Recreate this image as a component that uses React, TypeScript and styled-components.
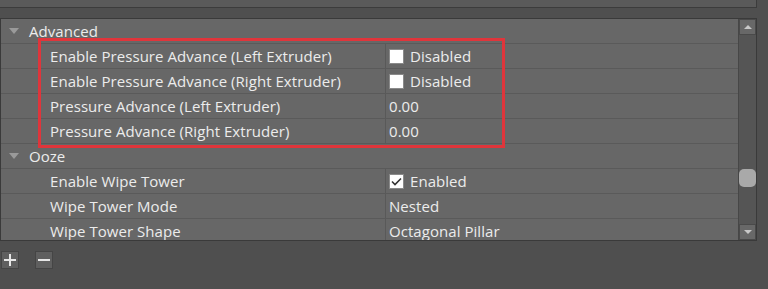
import { createGlobalStyle, styled } from 'styled-components'

const GlobalStyle = createGlobalStyle`
  html, body {
    margin: 0;
    padding: 0;
    background: #4f4f4f;
  }
  body {
    font-family: "Open Sans", "Noto Sans", sans-serif;
    color: #ececec;
  }
`

const Page = styled.div`
  width: 768px;
  height: 289px;
  overflow: hidden;
  background: #4f4f4f;
`

const TopPanel = styled.div`
  width: 756px;
  height: 7px;
  background: #5a5a5a;
  border-right: 1px solid #3c3c3c;
  border-bottom: 1px solid #3c3c3c;
`

const Tree = styled.div`
  position: relative;
  margin-top: 10px;
  width: 755px;
  height: 221px;
  display: flex;
  border: 1px solid #3a3a3a;
  background: #666666;
`

const Rows = styled.div`
  flex: 1;
  overflow: hidden;
`

const Row = styled.div<{ $header?: boolean }>`
  box-sizing: border-box;
  height: 25px;
  display: flex;
  align-items: center;
  border-bottom: 1px solid #5a5a5a;
  background: #676767;
  font-size: 15px;
  letter-spacing: 0.05px;
  white-space: nowrap;
`

const Triangle = styled.span`
  width: 0;
  height: 0;
  margin: 0 10px 0 8px;
  border-left: 5px solid transparent;
  border-right: 5px solid transparent;
  border-top: 6px solid #9a9a9a;
`

const Label = styled.div`
  width: 335px;
  padding-left: 49px;
`

const Value = styled.div`
  flex: 1;
  align-self: stretch;
  display: flex;
  align-items: center;
  gap: 6px;
  padding-left: 3px;
  border-left: 1px solid #595959;
`

const Check = styled.span`
  box-sizing: border-box;
  width: 15px;
  height: 15px;
  background: #ffffff;
  border: 1px solid #8a8a8a;
  display: flex;
  align-items: center;
  justify-content: center;
`

const Scrollbar = styled.div`
  width: 17px;
  display: flex;
  flex-direction: column;
  background: #555555;
  border-left: 1px solid #474747;
`

const ScrollButton = styled.div`
  height: 16px;
  background: #686868;
  border: 1px solid #4a4a4a;
  box-sizing: border-box;
  display: flex;
  align-items: center;
  justify-content: center;
`

const Track = styled.div`
  flex: 1;
  padding-top: 134px;
`

const Thumb = styled.div`
  width: 17px;
  height: 18px;
  border-radius: 5px;
  background: #a9a9a9;
`

const Arrow = styled.span<{ $up?: boolean }>`
  width: 0;
  height: 0;
  border-left: 4px solid transparent;
  border-right: 4px solid transparent;
  ${p => p.$up ? 'border-bottom: 4px solid #c8c8c8;' : 'border-top: 4px solid #c8c8c8;'}
`

const Highlight = styled.div`
  position: absolute;
  left: 37px;
  top: 19px;
  width: 461px;
  height: 104px;
  border: 3px solid #e0353b;
  pointer-events: none;
`

const Buttons = styled.div`
  display: flex;
  gap: 16px;
  padding: 10px 0 0 1px;
`

const ToolButton = styled.div`
  box-sizing: border-box;
  width: 18px;
  height: 18px;
  background: #5f5f5f;
  border: 1px solid #454545;
  display: flex;
  align-items: center;
  justify-content: center;
`

type Item =
  | { kind: 'header'; title: string }
  | { kind: 'prop'; label: string; value: string; check?: boolean }

const items: Item[] = [
  { kind: 'header', title: 'Advanced' },
  { kind: 'prop', label: 'Enable Pressure Advance (Left Extruder)', value: 'Disabled', check: false },
  { kind: 'prop', label: 'Enable Pressure Advance (Right Extruder)', value: 'Disabled', check: false },
  { kind: 'prop', label: 'Pressure Advance (Left Extruder)', value: '0.00' },
  { kind: 'prop', label: 'Pressure Advance (Right Extruder)', value: '0.00' },
  { kind: 'header', title: 'Ooze' },
  { kind: 'prop', label: 'Enable Wipe Tower', value: 'Enabled', check: true },
  { kind: 'prop', label: 'Wipe Tower Mode', value: 'Nested' },
  { kind: 'prop', label: 'Wipe Tower Shape', value: 'Octagonal Pillar' },
]

export default function App (): JSX.Element {
  return (
    <Page>
      <GlobalStyle />
      <TopPanel />
      <Tree>
        <Rows>
          {items.map((item, i) => item.kind === 'header'
            ? (
              <Row key={i} $header>
                <Triangle />
                {item.title}
              </Row>
              )
            : (
              <Row key={i}>
                <Label>{item.label}</Label>
                <Value>
                  {item.check !== undefined && (
                    <Check>
                      {item.check && (
                        <svg width="11" height="9" viewBox="0 0 11 9">
                          <path d="M1 4.5 L4 7.5 L10 1.5" fill="none" stroke="#333" strokeWidth="1.6" />
                        </svg>
                      )}
                    </Check>
                  )}
                  {item.value}
                </Value>
              </Row>
              ))}
        </Rows>
        <Scrollbar>
          <ScrollButton><Arrow $up /></ScrollButton>
          <Track><Thumb /></Track>
          <ScrollButton><Arrow /></ScrollButton>
        </Scrollbar>
        <Highlight />
      </Tree>
      <Buttons>
        <ToolButton>
          <svg width="12" height="12" viewBox="0 0 12 12">
            <path d="M6 0 V12 M0 6 H12" stroke="#e6e6e6" strokeWidth="2" />
          </svg>
        </ToolButton>
        <ToolButton>
          <svg width="12" height="12" viewBox="0 0 12 12">
            <path d="M0 6 H12" stroke="#e6e6e6" strokeWidth="2" />
          </svg>
        </ToolButton>
      </Buttons>
    </Page>
  )
}
